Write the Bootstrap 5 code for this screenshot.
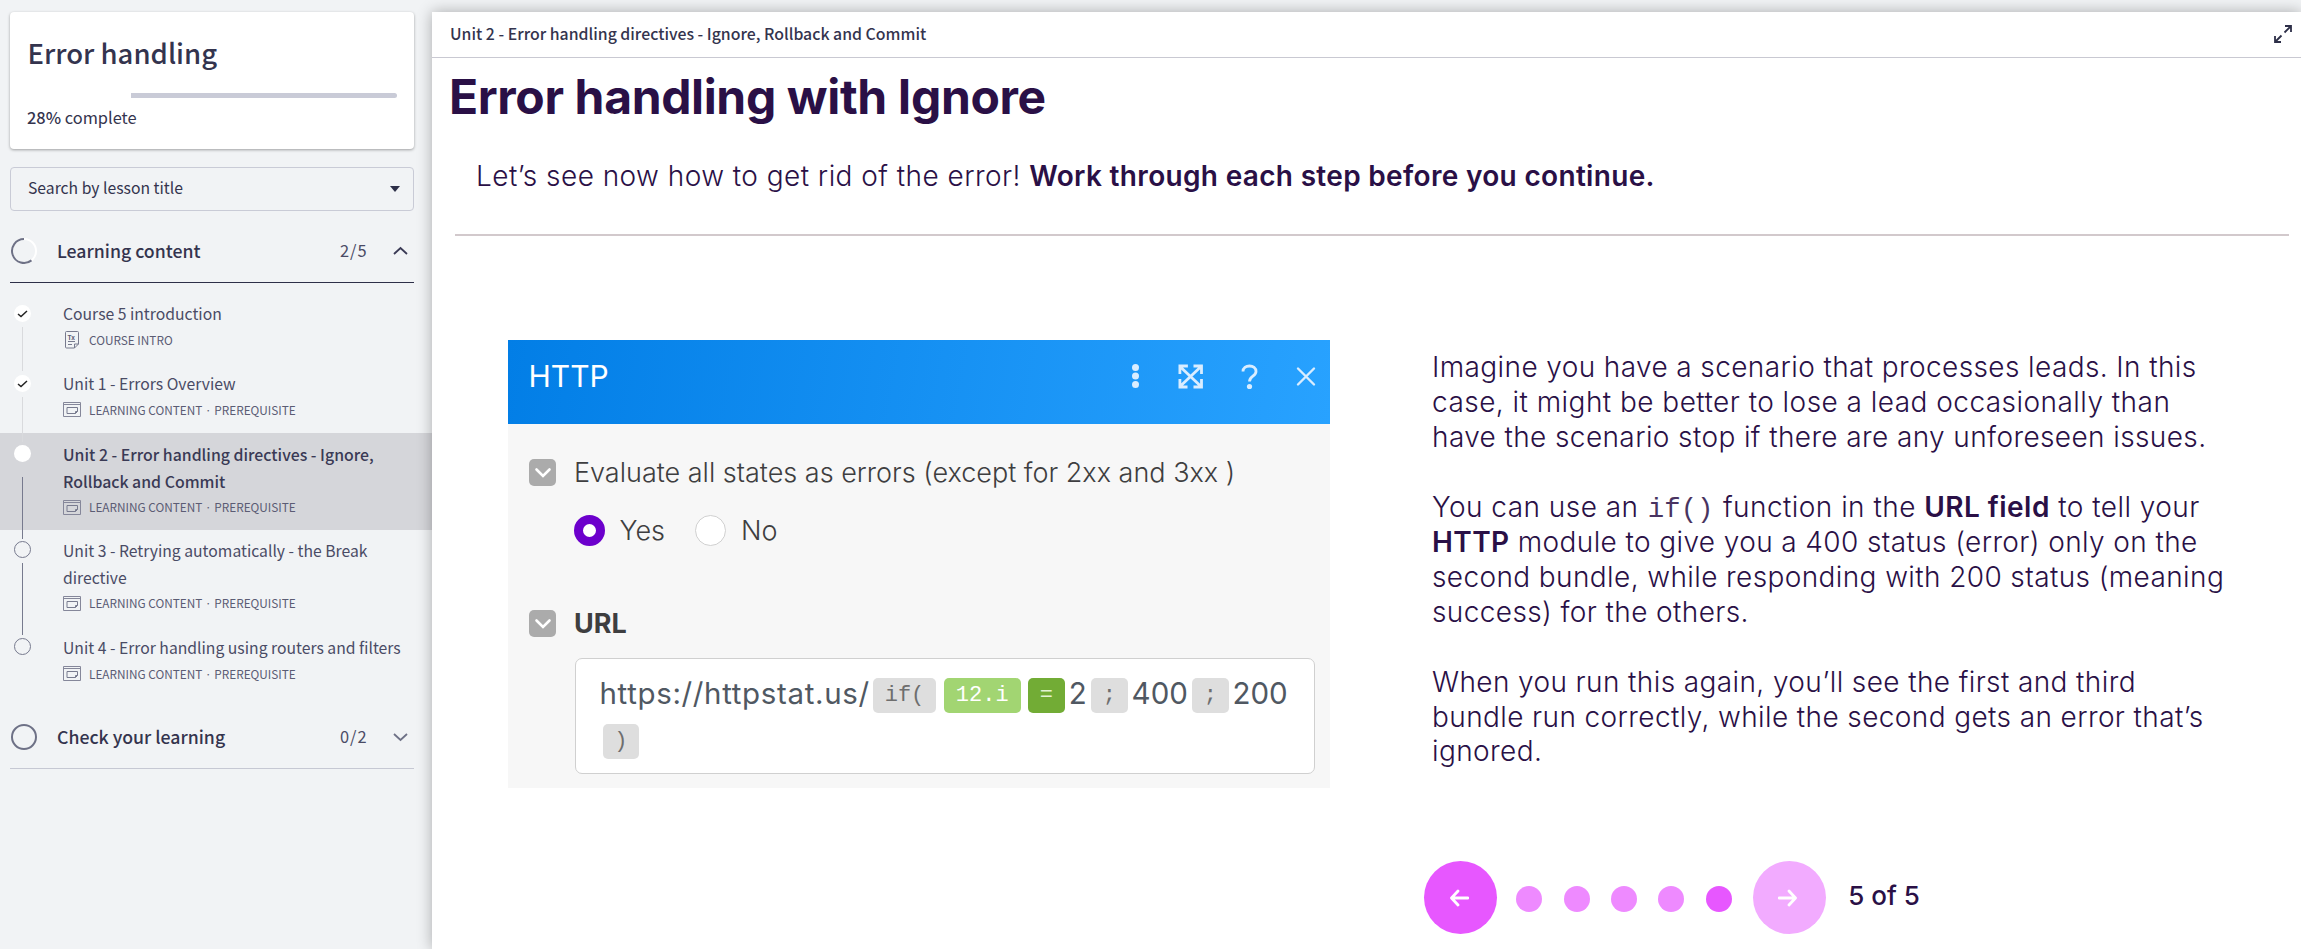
<!DOCTYPE html>
<html lang="en">
<head>
<meta charset="utf-8">
<meta name="viewport" content="width=device-width, initial-scale=1">
<title>Error handling</title>
<link href="https://cdn.jsdelivr.net/npm/bootstrap@5.3.0/dist/css/bootstrap.min.css" rel="stylesheet">
<style>
body{background:#f1f3f5;color:#34344e;font-family:"Noto Sans CJK SC",sans-serif;height:949px;overflow:hidden}
.side{width:432px;height:949px}
.course{margin:12px 18px 0 10px;height:137px;border-radius:4px;box-shadow:0 1px 3px rgba(0,0,0,.35);padding:20px 17px 0 18px}
.course h2{font-size:27.5px;line-height:40px;font-weight:500;text-indent:-.5px}
.track{height:5px;margin-top:21px;margin-left:-1px;border-radius:3px}
.track .progress-bar{background:#c9cbd7}
.pct{font-size:16.4px;line-height:26px;margin:6px 0 0 -1px}
.find{margin:18px 18px 0 10px;height:44px;border:1px solid #c9cbd6;border-radius:4px;padding:0 13px 0 17px;font-size:15.73px}
.find span{padding-bottom:3px}
.sect{margin:8px 18px 0 10px;height:64px;border-bottom:1px solid #2d2f48}
.sect .name{font-size:17.7px;font-weight:500;margin-left:19px}
.sect .cnt{font-size:16.4px;letter-spacing:1px;width:52px;color:#4a4b65}
.sect .chev{margin-right:5px}
.sect.closed{border-color:#c6c8d3}
.items{padding:9px 0 8px}
.item{height:71px;color:#4a4b65}
.item.first{height:70px}
.item.tall{height:96px}
.item.on{height:97px;background:#d5d6da;color:#3a3a55}
.rail{width:63px;padding:13px 0 0 14px}
.on .rail,.on~.item .rail{padding-top:12px}
.on~.tall .rail{padding-top:11px}
.dot{width:17px;height:17px;border-radius:50%;background:#fff;flex:none}
.dot.open{border:1px solid #777a8e;background:transparent}
.stem{width:1px;flex:1;margin:5px 0 -9px 8px;background:#d9dadd;z-index:1}
.stem.dark{background:#777a8e}
.on .stem{margin-top:15px}
.ttl{font-size:15.73px;line-height:26.5px;padding-top:9px}
.tall .ttl{padding-top:8px}
.on .ttl{font-weight:500;font-size:15.85px}
.meta{font-size:11.8px;line-height:18px;margin-top:3px;color:#5b5c74}
.meta svg{margin-right:8px;flex:none}
.meta i{font:11.8px Inter,sans-serif;margin:0 1.6px}
.stage{height:937px;margin-top:12px;box-shadow:0 0 14px rgba(0,0,0,.3);color:#2a1046;font-family:Inter,sans-serif}
.bar{height:46px;border-bottom:1px solid #c9c9d2;padding:0 9px 1px 18px;font:500 15.83px/40px "Noto Sans CJK SC",sans-serif;color:#34344e}
h1.big{font-size:48px;line-height:58px;font-weight:700;letter-spacing:-.36px;margin:10px 0 0 17px}
.intro{font-size:28px;line-height:40px;font-weight:300;letter-spacing:.45px;margin:30px 0 0 44px}
.intro b{letter-spacing:.32px}
.rule{height:2px;background:#d2c9cc;margin:38px 12px 0 23px}
.panel{width:822px;height:448px;margin:104px 0 0 75.5px;background:#f7f7f7;color:#3e3e40}
.phead{height:84px;background:linear-gradient(100deg,#027ee6,#28a2ff);padding:0 14px 12px 21px;color:#fff;font-size:30px}
.opt{font-size:27px;line-height:27px;font-weight:300}
.row-a{margin-top:35px}
.row-b{margin:29px 0 0 66px}
.row-b .yes+.opt{margin:0 30px 0 15px}
.row-b .opt:last-child{margin-left:15px}
.row-c{margin-top:64px}
.tick{width:27px;height:27px;border-radius:5px;background:#ababab;margin:0 18.5px 0 21px;flex:none}
.radio{width:31px;height:31px;border-radius:50%;border:1.5px solid #d0d0d0;background:#fff}
.radio.yes{border:9.5px solid #6c00cc}
.url{margin:21px 15px 0 67px;height:116px;border:1.5px solid #d0d0d0;border-radius:7px;background:#fff;padding:19px 0 0 24px;font-size:29.5px;color:#505862}
.url .r{height:35px;line-height:30px}
.host{width:273.5px;letter-spacing:.65px}
.chip{height:35px;border-radius:5px;background:#dedede;color:#6e6e6e;font:22px/35px "Liberation Mono",monospace;text-align:center;width:36.5px}
.chip.fn{width:63px;margin-right:7.5px}
.chip.ref{width:77.5px;margin-right:7px;background:#a2d572;color:#fff}
.chip.eq{background:#72ac35;color:#e3f3d3}
.chip.end{margin:11px 0 0 3px}
.copy{margin:114px 0 0 102.5px;font-weight:300;font-size:28px;line-height:34.95px;letter-spacing:.39px;white-space:nowrap}
.copy .w{letter-spacing:.46px}
.copy b,.intro b{font-weight:600}
.copy code{font:300 27.4px/0 "Liberation Mono",monospace;color:inherit;letter-spacing:0;margin:0 1px;opacity:.85}
.pager{margin:92px 0 0 94.5px}
.rb{width:73px;height:73px;border-radius:50%;background:#e757ff;padding-right:4px}
.rb:first-child{margin-right:19.3px}
.rb.next{background:#f2abff}
.pd{width:26px;height:26px;border-radius:50%;background:#ee8aff;margin:3px 21.4px 0 0}
.pd.cur{background:#e757ff}
.count{font-size:26px;line-height:30px;font-weight:500;margin:0 0 3px 22px}
</style>
</head>
<body>
<svg width="0" height="0" class="position-absolute"><defs>
<symbol id="lc" viewBox="0 0 18 15"><path d="M.5.5h17v14H.5z M.5 2.5h17" fill="none" stroke="#85879a"/><path d="M12.5 11.500H4v-6h10.500v4l-2 2v-2h2" fill="none" stroke="#777a8e"/></symbol>
<symbol id="down" viewBox="0 0 27 27"><path d="M7.500 10.500l6.500 6.500 6.500-6.500" fill="none" stroke="#fff" stroke-width="2.600" stroke-linecap="round"/></symbol>
<symbol id="check" viewBox="0 0 11 8"><path d="M1 4l3 2.500L10 1" fill="none" stroke="#222" stroke-width="1.500"/></symbol>
</defs></svg>
<div class="d-flex">
<aside class="side flex-shrink-0">
 <div class="course bg-white">
  <h2 class="m-0">Error handling</h2>
  <div class="track d-flex justify-content-end"><div class="progress-bar rounded-end" style="width:72%"></div></div>
  <div class="pct"><b class="fw-medium">28%</b> complete</div>
 </div>
 <div class="find d-flex align-items-center justify-content-between"><span>Search by lesson title</span>
  <svg width="10" height="6"><path d="M0 0h10L5 6z" fill="#2d2f48"/></svg></div>
 <div class="sect d-flex align-items-center">
  <svg width="28" height="28" viewBox="0 0 28 28"><circle cx="14" cy="14" r="12" fill="none" stroke="#fff" stroke-width="2"/><path d="M14 2A12 12 0 1 0 21.500 23.400" fill="none" stroke="#6e7186" stroke-width="2"/></svg>
  <span class="name">Learning content</span><span class="cnt ms-auto">2/5</span>
  <svg class="chev" width="17" height="10" viewBox="0 0 17 10"><path d="M2 8l6.500-6L15 8" fill="none" stroke="#3a3a55" stroke-width="1.800"/></svg>
 </div>
 <div class="items">
  <div class="item first d-flex"><div class="rail d-flex flex-column"><div class="dot d-flex align-items-center justify-content-center"><svg width="11" height="8"><use href="#check"/></svg></div><div class="stem"></div></div>
   <div><div class="ttl">Course 5 introduction</div><div class="meta d-flex align-items-center"><svg width="18" height="18" viewBox="0 0 18 18"><path d="M3.500.5h11a1 1 0 0 1 1 1V13l-4 4h-8a1 1 0 0 1-1-1V1.500a1 1 0 0 1 1-1z M11.500 17v-4h4 M5 10.500h7 M5 13.500h4" fill="none" stroke="#777a8e"/><text x="4.500" y="8.500" font-size="6.500" font-weight="700" fill="#5b5c74">Tx</text></svg><span>COURSE INTRO</span></div></div></div>
  <div class="item d-flex"><div class="rail d-flex flex-column"><div class="dot d-flex align-items-center justify-content-center"><svg width="11" height="8"><use href="#check"/></svg></div><div class="stem"></div></div>
   <div><div class="ttl">Unit 1 - Errors Overview</div><div class="meta d-flex align-items-center"><svg width="18" height="15"><use href="#lc"/></svg><span>LEARNING CONTENT <i>·</i> PREREQUISITE</span></div></div></div>
  <div class="item on d-flex"><div class="rail d-flex flex-column"><div class="dot"></div><div class="stem dark"></div></div>
   <div><div class="ttl">Unit 2 - Error handling directives - Ignore,<br>Rollback and Commit</div><div class="meta d-flex align-items-center"><svg width="18" height="15"><use href="#lc"/></svg><span>LEARNING CONTENT <i>·</i> PREREQUISITE</span></div></div></div>
  <div class="item tall d-flex"><div class="rail d-flex flex-column"><div class="dot open"></div><div class="stem dark"></div></div>
   <div><div class="ttl">Unit 3 - Retrying automatically - the Break<br>directive</div><div class="meta d-flex align-items-center"><svg width="18" height="15"><use href="#lc"/></svg><span>LEARNING CONTENT <i>·</i> PREREQUISITE</span></div></div></div>
  <div class="item d-flex"><div class="rail d-flex flex-column"><div class="dot open"></div></div>
   <div><div class="ttl">Unit 4 - Error handling using routers and filters</div><div class="meta d-flex align-items-center"><svg width="18" height="15"><use href="#lc"/></svg><span>LEARNING CONTENT <i>·</i> PREREQUISITE</span></div></div></div>
 </div>
 <div class="sect closed mt-0 d-flex align-items-center">
  <svg width="28" height="28" viewBox="0 0 28 28"><circle cx="14" cy="14" r="12" fill="none" stroke="#6e7186" stroke-width="2"/></svg>
  <span class="name">Check your learning</span><span class="cnt ms-auto">0/2</span>
  <svg class="chev" width="17" height="10" viewBox="0 0 17 10"><path d="M2 2l6.500 6L15 2" fill="none" stroke="#6e7186" stroke-width="1.800"/></svg>
 </div>
</aside>
<main class="stage flex-grow-1 bg-white">
 <div class="bar d-flex align-items-center justify-content-between"><span>Unit 2 - Error handling directives - Ignore, Rollback and Commit</span>
  <svg width="18" height="18" viewBox="0 0 18 18"><path d="M11 1h6v6 M17 1l-6.500 6.500 M1 11v6h6 M1 17l6.500-6.500" fill="none" stroke="#2d2f48" stroke-width="1.800"/></svg></div>
 <h1 class="big">Error handling with Ignore</h1>
 <div class="intro">Let’s see now how to get rid of the error! <b>Work through each step before you continue.</b></div>
 <div class="rule"></div>
 <div class="d-flex align-items-start">
  <div class="panel flex-shrink-0">
   <div class="phead d-flex align-items-center"><span>HTTP</span>
    <svg class="ms-auto" width="184" height="30" viewBox="0 0 184 30"><g transform="translate(-5.500 0)"><g fill="#d9edff"><circle cx="9" cy="6.500" r="3.500"/><circle cx="9" cy="15" r="3.500"/><circle cx="9" cy="23.500" r="3.500"/><circle cx="123" cy="25.500" r="2.600"/></g><g fill="none" stroke="#d9edff" stroke-width="2.800"><path d="M54 6l20 19M74 6L54 25M53.400 13V5h8M67 5h8v8M75 18v8h-8M61 26h-7.600v-8"/><path d="M116.500 10.500c0-3.500 3-5.500 6.500-5.500s6.500 2 6.500 5.500c0 5-6.500 4.500-6.500 10"/></g></g><path d="M166 7.500l16 16M182 7.500l-16 16" fill="none" stroke="#d9edff" stroke-width="2.400" stroke-linecap="round"/></svg></div>
   <div class="row-a d-flex align-items-center"><svg class="tick"><use href="#down"/></svg><span class="opt">Evaluate all states as errors (except for 2xx and 3xx )</span></div>
   <div class="row-b d-flex align-items-center"><span class="radio yes"></span><span class="opt">Yes</span><span class="radio"></span><span class="opt">No</span></div>
   <div class="row-c d-flex align-items-center"><svg class="tick"><use href="#down"/></svg><b class="opt fw-bold">URL</b></div>
   <div class="url">
    <div class="r d-flex"><span class="host">https://httpstat.us/</span><span class="chip fn">if(</span><span class="chip ref">12.i</span><span class="chip eq">=</span><span class="text-center" style="width:26.500px">2</span><span class="chip">;</span><span class="text-center" style="width:64.500px">400</span><span class="chip">;</span><span class="ms-1">200</span></div>
    <div class="chip end">)</div>
   </div>
  </div>
  <div>
   <div class="copy">Imagine you have a scenario that processes leads. In this<br><span class="w">case, it might be better to lose a lead occasionally than</span><br>have the scenario stop if there are any unforeseen issues.<br><br><span class="w">You can use an <code>if()</code> function in the <b>URL field</b> to tell your</span><br><b>HTTP</b> module to give you a 400 status (error) only on the<br>second bundle, while responding with 200 status (meaning<br>success) for the others.<br><br>When you run this again, you’ll see the first and third<br>bundle run correctly, while the second gets an error that’s<br>ignored.</div>
   <div class="pager d-flex align-items-center"><span class="rb d-flex align-items-center justify-content-center"><svg width="20" height="18" viewBox="0 0 20 18"><path d="M19 9H3M9 2L2.500 9 9 16" fill="none" stroke="#fff" stroke-width="2.800" stroke-linecap="round" stroke-linejoin="round"/></svg></span><span class="pd"></span><span class="pd"></span><span class="pd"></span><span class="pd"></span><span class="pd cur"></span><span class="rb next d-flex align-items-center justify-content-center"><svg width="20" height="18" viewBox="0 0 20 18"><path d="M1 9h16M11 2l6.500 7L11 16" fill="none" stroke="#fff" stroke-width="2.800" stroke-linecap="round" stroke-linejoin="round"/></svg></span><span class="count">5 of 5</span></div>
  </div>
 </div>
</main>
</div>
<script src="https://cdn.jsdelivr.net/npm/bootstrap@5.3.0/dist/js/bootstrap.bundle.min.js"></script>
</body>
</html>
